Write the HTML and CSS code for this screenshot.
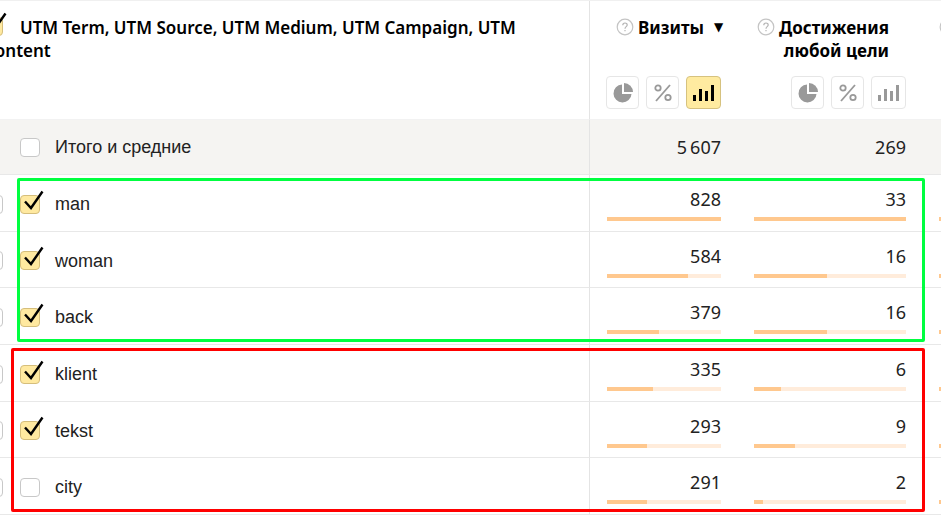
FILE: index.html
```
<!DOCTYPE html>
<html lang="ru">
<head>
	<meta charset="UTF-8">
	<title>UTM</title>
	<link rel="stylesheet" href="styles.css">
</head>
<body>
	<svg class="sprite" aria-hidden="true">
		<symbol id="tick" viewBox="0 0 20 20"><path d="M1 11.5L7 18L18.5 1.500" fill="none" stroke="#000" stroke-width="2.400"/></symbol>
		<symbol id="help" viewBox="0 0 18 18"><circle cx="9" cy="9" r="7.800" fill="none" stroke="#c4c4c4" stroke-width="1.200"/><path d="M6.800 7.200C6.800 4.300 11.200 4.300 11.200 7C11.200 8.600 9 8.700 9 10.700M9 12V13.300" fill="none" stroke="#b4b4b4" stroke-width="1.200"/></symbol>
		<symbol id="pie" viewBox="0 0 20 20"><path d="M9 1.500A9 9 0 1 0 18.500 11H9Z"/><path d="M11 0A9 9 0 0 1 20 9H11Z"/></symbol>
		<symbol id="percent" viewBox="0 0 20 20"><g fill="none" stroke="currentColor" stroke-width="1.800"><circle cx="5" cy="5" r="2.700"/><circle cx="15" cy="14.500" r="2.700"/><path d="M17 2L3 18"/></g></symbol>
		<symbol id="bars" viewBox="0 0 22 16"><path d="M0 10h3v6H0zM6 4h3v12H6zM12 6h3v10h-3zM18 0h3v16h-3z"/></symbol>
	</svg>
	<div class="report">
		<table class="grid">
			<colgroup>
				<col>
				<col class="col-visits">
				<col class="col-goal">
				<col class="col-goal">
			</colgroup>
			<thead>
				<tr>
					<th class="dims">
						<label class="dims-name"><span class="check"><input type="checkbox" checked><svg><use href="#tick"/></svg></span>UTM Term, UTM Source, UTM Medium, UTM Campaign, UTM Content</label>
					</th>
					<th>
						<div class="metric">
							<div class="metric-name"><svg class="help"><use href="#help"/></svg><a href="#">Визиты</a><span class="sort">▼</span></div>
							<div class="modes">
								<button class="mode" aria-label="Доля"><svg><use href="#pie"/></svg></button>
								<button class="mode" aria-label="Проценты"><svg><use href="#percent"/></svg></button>
								<button class="mode wide active" aria-label="Значения"><svg><use href="#bars"/></svg></button>
							</div>
						</div>
					</th>
					<th>
						<div class="metric">
							<div class="metric-name"><svg class="help"><use href="#help"/></svg><a href="#">Достижения<br>любой цели</a><span class="sort"></span></div>
							<div class="modes">
								<button class="mode" aria-label="Доля"><svg><use href="#pie"/></svg></button>
								<button class="mode" aria-label="Проценты"><svg><use href="#percent"/></svg></button>
								<button class="mode wide" aria-label="Значения"><svg><use href="#bars"/></svg></button>
							</div>
						</div>
					</th>
					<th>
						<div class="metric">
							<div class="metric-name start"><svg class="help"><use href="#help"/></svg></div>
						</div>
					</th>
				</tr>
			</thead>
			<tbody>
				<tr class="total">
					<td class="dims"><div class="name"><span class="check spacer"></span><label class="item"><span class="check"><input type="checkbox"></span>Итого и средние</label></div></td>
					<td>5&#8201;607</td>
					<td>269</td>
					<td></td>
				</tr>
			</tbody>
			<tbody class="group green">
				<tr>
					<td class="dims"><div class="name"><span class="check"><input type="checkbox" aria-label="Развернуть man"></span><label class="item"><span class="check"><input type="checkbox" checked><svg><use href="#tick"/></svg></span>man</label></div></td>
					<td>828<div class="bar"><div class="fill" style="width:100%"></div></div></td>
					<td>33<div class="bar"><div class="fill" style="width:100%"></div></div></td>
					<td>&nbsp;<div class="bar"><div class="fill" style="width:100%"></div></div></td>
				</tr>
				<tr>
					<td class="dims"><div class="name"><span class="check"><input type="checkbox" aria-label="Развернуть woman"></span><label class="item"><span class="check"><input type="checkbox" checked><svg><use href="#tick"/></svg></span>woman</label></div></td>
					<td>584<div class="bar"><div class="fill" style="width:71%"></div></div></td>
					<td>16<div class="bar"><div class="fill" style="width:48%"></div></div></td>
					<td>&nbsp;<div class="bar"><div class="fill" style="width:48%"></div></div></td>
				</tr>
				<tr>
					<td class="dims"><div class="name"><span class="check"><input type="checkbox" aria-label="Развернуть back"></span><label class="item"><span class="check"><input type="checkbox" checked><svg><use href="#tick"/></svg></span>back</label></div></td>
					<td>379<div class="bar"><div class="fill" style="width:46%"></div></div></td>
					<td>16<div class="bar"><div class="fill" style="width:48%"></div></div></td>
					<td>&nbsp;<div class="bar"><div class="fill" style="width:48%"></div></div></td>
				</tr>
			</tbody>
			<tbody class="group red">
				<tr>
					<td class="dims"><div class="name"><span class="check"><input type="checkbox" aria-label="Развернуть klient"></span><label class="item"><span class="check"><input type="checkbox" checked><svg><use href="#tick"/></svg></span>klient</label></div></td>
					<td>335<div class="bar"><div class="fill" style="width:40%"></div></div></td>
					<td>6<div class="bar"><div class="fill" style="width:18%"></div></div></td>
					<td>&nbsp;<div class="bar"><div class="fill" style="width:18%"></div></div></td>
				</tr>
				<tr>
					<td class="dims"><div class="name"><span class="check"><input type="checkbox" aria-label="Развернуть tekst"></span><label class="item"><span class="check"><input type="checkbox" checked><svg><use href="#tick"/></svg></span>tekst</label></div></td>
					<td>293<div class="bar"><div class="fill" style="width:35%"></div></div></td>
					<td>9<div class="bar"><div class="fill" style="width:27%"></div></div></td>
					<td>&nbsp;<div class="bar"><div class="fill" style="width:27%"></div></div></td>
				</tr>
				<tr>
					<td class="dims"><div class="name"><span class="check"><input type="checkbox" aria-label="Развернуть city"></span><label class="item"><span class="check"><input type="checkbox"></span>city</label></div></td>
					<td>291<div class="bar"><div class="fill" style="width:35%"></div></div></td>
					<td>2<div class="bar"><div class="fill" style="width:6%"></div></div></td>
					<td>&nbsp;<div class="bar"><div class="fill" style="width:6%"></div></div></td>
				</tr>
			</tbody>
		</table>
	</div>
</body>
</html>
```
FILE: styles.css
```
*{
	box-sizing: border-box;
}
body{
	margin: 0;
	overflow: hidden;
	background: #fff;
	color: #222;
	font-family: "Noto Sans", sans-serif;
	font-size: 18px;
	line-height: 24px;
}
.sprite{
	display: none;
}
.report{
	overflow: hidden;
	border-top: 1px solid #f0f0f0;
	padding-bottom: 8px;
}
/* the grid is wider than the window and scrolled a little to the right */
.grid{
	width: calc(100% + 184px);
	margin-left: -18px;
	table-layout: fixed;
	border-collapse: separate;
	border-spacing: 0;
}
.col-visits{
	width: 147px;
}
.col-goal{
	width: 185px;
}
th{
	height: 119px;
	padding: 15px 16px 0 17px;
	vertical-align: top;
	border-bottom: 1px solid #f2f2f2;
	color: #000;
	font-size: 17px;
	font-weight: 700;
	line-height: 23px;
	text-align: right;
}
td{
	height: 57px;
	padding: 12px 16px 0 17px;
	vertical-align: top;
	border-bottom: 1px solid #e8e8e8;
	text-align: right;
}
.group tr:nth-child(2) td{
	height: 56px;
}
.dims{
	border-right: 1px solid #e4e4e4;
	text-align: left;
}
th.dims{
	padding: 15px 60px 0 2px;
	font-weight: 600;
}
.dims-name{
	display: block;
	text-indent: -1px;
}
.dims-name .check{
	display: inline-block;
	margin-right: 17px;
	vertical-align: -2px;
	text-indent: 0;
}
td.dims{
	padding: 2px 0 0;
	vertical-align: middle;
	font-family: "Liberation Sans", sans-serif;
}
.total td{
	height: 55px;
	padding-top: 15px;
	background: #f5f4f2;
}
.total td.dims{
	padding: 0;
}
.name, .item{
	display: flex;
	align-items: center;
}
.name{
	gap: 17px;
	padding-left: 1px;
}
.item{
	gap: 15px;
}

.check{
	position: relative;
	width: 20px;
	height: 19px;
	flex: none;
}
.check input{
	display: block;
	appearance: none;
	width: 20px;
	height: 19px;
	margin: 0;
	border: 1px solid #c8c8c8;
	border-radius: 4px;
	background: #fff;
}
.check input:checked{
	border-color: #d5be7c;
	background: #ffe9a0;
}
.check svg{
	position: absolute;
	left: 4px;
	top: -5px;
	width: 20px;
	height: 20px;
	pointer-events: none;
}

.metric{
	display: flex;
	flex-direction: column;
	align-items: flex-end;
}
.metric-name{
	display: flex;
	height: 60px;
}
.metric-name.start{
	align-self: flex-start;
}
.metric a{
	color: #000;
	text-decoration: none;
}
.help{
	width: 18px;
	height: 18px;
	margin: 2px 4px 0 0;
}
.sort{
	width: 17px;
	padding-left: 10px;
	font-family: "DejaVu Sans", sans-serif;
	font-size: 12px;
}
.modes{
	display: flex;
	gap: 7px;
}
.mode{
	display: flex;
	align-items: center;
	justify-content: center;
	width: 33px;
	height: 33px;
	padding: 0;
	border: 1px solid #e6e6e6;
	border-radius: 4px;
	background: #fff;
	color: #999;
}
.mode.wide{
	width: 35px;
}
.mode.active{
	border-color: #d6c27f;
	background: #ffeba0;
	color: #000;
}
.mode svg{
	width: 20px;
	height: 20px;
	fill: currentColor;
}
.mode.wide svg{
	width: 22px;
	height: 16px;
}

.bar{
	height: 4px;
	margin-top: 6px;
	background: #ffecdb;
}
.fill{
	height: 4px;
	background: #ffc88e;
}

/* frames round the two groups of rows */
.group{
	position: relative;
}
.group::after{
	content: "";
	position: absolute;
	top: 3px;
	bottom: 3px;
	left: 35px;
	right: 182px;
	border: 3px solid #00ff40;
	border-radius: 2px;
	pointer-events: none;
}
.red::after{
	left: 29px;
	border-color: #f00;
}
```
